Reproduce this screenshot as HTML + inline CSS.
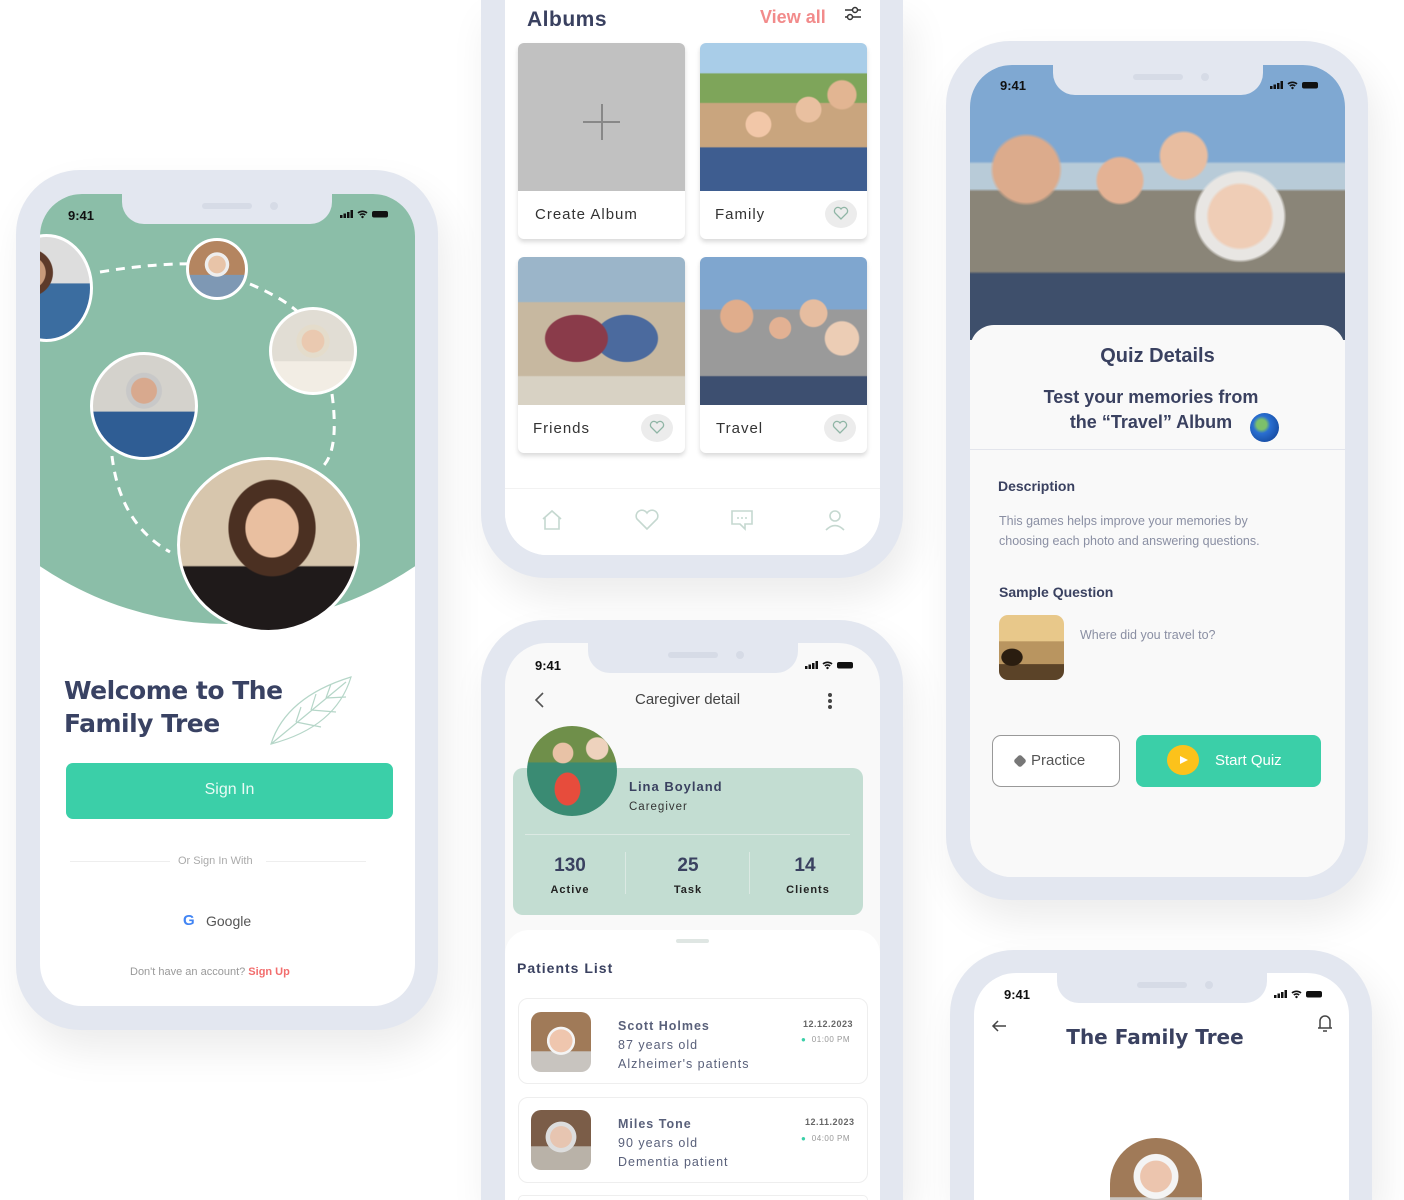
<!DOCTYPE html>
<html style="width:1404px;height:1200px;overflow:hidden"><head><meta charset="utf-8"><style>
*{margin:0;padding:0;box-sizing:border-box}
body{width:1404px;height:1200px;background:#fff;position:relative;overflow:hidden;font-family:"Liberation Sans",sans-serif;color:#3a4160}
.a{position:absolute}
.frame{position:absolute;background:#e3e7f0;border-radius:64px;box-shadow:8px 20px 40px rgba(0,0,0,.08)}
.screen{position:absolute;border-radius:42px;overflow:hidden;background:#fff}
.notch{position:absolute;background:#e3e7f0;height:30px;width:210px;border-radius:0 0 22px 22px}
.notch:before{content:"";position:absolute;left:80px;top:9px;width:50px;height:6px;border-radius:3px;background:#d6dbe6}
.notch:after{content:"";position:absolute;left:148px;top:8px;width:8px;height:8px;border-radius:50%;background:#d6dbe6}
.time{position:absolute;font-size:13px;font-weight:bold;color:#111}
.circ{position:absolute;border-radius:50%;border:3px solid #fff;overflow:hidden}
.card{position:absolute;background:#fff;box-shadow:0 3px 5px rgba(0,0,0,.15);border-radius:6px;overflow:hidden}
.heart{position:absolute;width:32px;height:28px;border-radius:50%;background:#ececec}
.b{font-weight:bold}
</style></head><body>

<svg width="0" height="0" style="position:absolute"><defs>
<g id="st"><rect x="0" y="6" width="2.5" height="3" fill="#111"/><rect x="3.5" y="4.5" width="2.5" height="4.5" fill="#111"/><rect x="7" y="3" width="2.5" height="6" fill="#111"/><rect x="10.5" y="1" width="2.5" height="8" fill="#111"/><path d="M18 4a7 7 0 0 1 9 0M19.8 6a4 4 0 0 1 5.4 0" stroke="#111" stroke-width="1.6" fill="none"/><circle cx="22.5" cy="8" r="1.2" fill="#111"/><rect x="32" y="2" width="16" height="6.5" rx="2" fill="#111"/></g>
<g id="hrt"><path d="M8 13 L2 7 A3.3 3.3 0 0 1 8 3 A3.3 3.3 0 0 1 14 7 Z" fill="none" stroke="#8fb5a5" stroke-width="1.3"/></g>
</defs></svg>

<!-- Phone 1 -->
<div class="frame" style="left:16px;top:170px;width:422px;height:860px"></div>
<div class="screen" style="left:40px;top:194px;width:375px;height:812px">
  <div class="a" style="left:-160px;top:-300px;width:695px;height:730px;border-radius:50%;background:#8bbea8"></div>
  <div class="time" style="left:28px;top:14px">9:41</div>
  <svg class="a" style="left:300px;top:15px" width="50" height="10"><use href="#st"/></svg>
  <svg class="a" style="left:0;top:0" width="375" height="440"><path d="M60 78 Q120 68 170 70 M210 90 Q245 105 260 120 M292 200 Q300 260 280 275 M72 262 Q80 330 130 358" stroke="#fff" stroke-width="3" stroke-dasharray="9 7" fill="none"/></svg>
  <div class="circ" style="left:-40px;top:40px;width:93px;height:108px;border-radius:50%;background:radial-gradient(circle at 30% 35%,#c89a7b 0 18%,#5d3a2a 19% 26%,transparent 27%),linear-gradient(#ddd 0 45%,#3b6da0 46%)"></div>
  <div class="circ" style="left:146px;top:44px;width:62px;height:62px;background:radial-gradient(circle at 50% 42%,#e8c4a8 0 20%,#eee 21% 28%,transparent 29%),linear-gradient(#b48560 0 60%,#7e98b4 61%)"></div>
  <div class="circ" style="left:229px;top:113px;width:88px;height:88px;background:radial-gradient(circle at 50% 38%,#eac9b0 0 17%,#e4dccb 18% 25%,transparent 26%),linear-gradient(#e1ddd4 0 62%,#f2ede4 63%)"></div>
  <div class="circ" style="left:50px;top:158px;width:108px;height:108px;background:radial-gradient(circle at 50% 35%,#d8a98e 0 15%,#c8c8c8 16% 21%,transparent 22%),linear-gradient(#d4d2cc 0 55%,#2f5d94 56%)"></div>
  <div class="circ" style="left:137px;top:263px;width:183px;height:176px;background:radial-gradient(ellipse at 52% 40%,#e9bfa0 0 20%,#4b3022 21% 33%,transparent 34%),linear-gradient(#d7c6ad 0 62%,#1f1a1a 63%)"></div>
  <div class="a b" style="left:24px;top:480px;font-size:25px;line-height:33px;color:#394263;font-family:'DejaVu Sans',sans-serif;letter-spacing:-.5px">Welcome to The<br>Family Tree</div>
  <svg class="a" style="left:226px;top:478px" width="90" height="78"><path d="M5 72 Q20 25 85 5 Q70 55 5 72Z M5 72 L80 10 M30 50 L35 35 M45 38 L50 22 M60 26 L65 12 M30 50 L55 55 M45 38 L70 40 M60 26 L80 25" stroke="#b5d6c8" stroke-width="1.2" fill="none"/></svg>
  <div class="a" style="left:26px;top:569px;width:327px;height:56px;border-radius:7px;background:#3bcfa8;color:#e8fbf5;font-size:16px;text-align:center;line-height:54px">Sign In</div>
  <div class="a" style="left:30px;top:667px;width:100px;border-top:1px solid #eee"></div>
  <div class="a" style="left:226px;top:667px;width:100px;border-top:1px solid #eee"></div>
  <div class="a" style="left:138px;top:661px;font-size:11px;color:#aaa">Or Sign In With</div>
  <div class="a b" style="left:143px;top:718px;font-size:15px;color:#4285f4">G</div>
  <div class="a" style="left:166px;top:719px;font-size:14px;color:#555">Google</div>
  <div class="a" style="left:90px;top:772px;font-size:11px;color:#999">Don't have an account? <span style="color:#f26d6d;font-weight:bold">Sign Up</span></div>
</div>
<div class="notch" style="left:122px;top:194px"></div>

<!-- Phone 2 albums -->
<div class="frame" style="left:481px;top:0;width:422px;height:578px;border-radius:0 0 64px 64px"></div>
<div class="screen" style="left:505px;top:0;width:375px;height:555px;border-radius:0 0 42px 42px">
 <div class="a" style="left:0;top:-60px;width:375px;height:615px">
  <div class="a b" style="left:22px;top:68px;font-size:21px;color:#3a4160;letter-spacing:.5px">Albums</div>
  <div class="a b" style="left:255px;top:67px;font-size:18px;color:#f28b8b">View all</div>
  <svg class="a" style="left:338px;top:64px" width="20" height="20"><path d="M2 6h16M2 13h16" stroke="#333" stroke-width="1.6"/><circle cx="12" cy="6" r="2.5" fill="#fff" stroke="#333" stroke-width="1.5"/><circle cx="7" cy="13" r="2.5" fill="#fff" stroke="#333" stroke-width="1.5"/></svg>
  <div class="card" style="left:13px;top:103px;width:167px;height:196px"><div style="height:148px;background:#c1c1c1;position:relative"><div class="a" style="left:65px;top:78px;width:37px;height:2px;background:#888"></div><div class="a" style="left:83px;top:61px;width:2px;height:36px;background:#888"></div></div><div class="a" style="left:17px;top:163px;font-size:15px;letter-spacing:1px;color:#333">Create Album</div></div>
  <div class="card" style="left:195px;top:103px;width:167px;height:196px"><div style="height:148px;background:radial-gradient(circle at 35% 55%,#f2c7a8 0 9%,transparent 10%),radial-gradient(circle at 65% 45%,#e9c0a0 0 9%,transparent 10%),radial-gradient(circle at 85% 35%,#e2b592 0 8%,transparent 9%),linear-gradient(#a9cde8 0 20%,#7ea55a 21% 40%,#c9a57e 41% 70%,#3e5d90 71%)"></div><div class="a" style="left:15px;top:163px;font-size:15px;letter-spacing:1px;color:#333">Family</div><div class="heart" style="left:125px;top:157px"><svg class="a" style="left:8px;top:6px" width="16" height="16"><use href="#hrt"/></svg></div></div>
  <div class="card" style="left:13px;top:317px;width:167px;height:196px"><div style="height:148px;background:radial-gradient(ellipse at 35% 55%,#8a3b4a 0 20%,transparent 21%),radial-gradient(ellipse at 65% 55%,#4b6a9e 0 20%,transparent 21%),linear-gradient(#9bb5c9 0 30%,#c7b8a0 31% 80%,#d8d2c4 81%)"></div><div class="a" style="left:15px;top:163px;font-size:15px;letter-spacing:1px;color:#333">Friends</div><div class="heart" style="left:123px;top:157px"><svg class="a" style="left:8px;top:6px" width="16" height="16"><use href="#hrt"/></svg></div></div>
  <div class="card" style="left:195px;top:317px;width:167px;height:196px"><div style="height:148px;background:radial-gradient(circle at 22% 40%,#e0ad8c 0 10%,transparent 11%),radial-gradient(circle at 48% 48%,#e2b193 0 9%,transparent 10%),radial-gradient(circle at 68% 38%,#e6bda0 0 9%,transparent 10%),radial-gradient(circle at 85% 55%,#eccdb5 0 10%,transparent 11%),linear-gradient(#7fa6cf 0 35%,#9a9a9a 36% 80%,#3d4f70 81%)"></div><div class="a" style="left:16px;top:163px;font-size:15px;letter-spacing:1px;color:#333">Travel</div><div class="heart" style="left:124px;top:157px"><svg class="a" style="left:8px;top:6px" width="16" height="16"><use href="#hrt"/></svg></div></div>
  <div class="a" style="left:0;top:548px;width:375px;height:67px;background:#fff;border-top:1px solid #f2f2f2"></div>
  <svg class="a" style="left:35px;top:568px" width="24" height="24"><path d="M3 11 L12 3 L21 11 M5 9 V21 H19 V9" stroke="#c5d8d0" stroke-width="1.6" fill="none"/></svg>
  <svg class="a" style="left:129px;top:568px" width="26" height="24"><path d="M13 21 L3 11 A5 5 0 0 1 13 5 A5 5 0 0 1 23 11 Z" stroke="#c5d8d0" stroke-width="1.6" fill="none"/></svg>
  <svg class="a" style="left:224px;top:568px" width="26" height="24"><path d="M3 3 H23 V16 H16 L16 21 L11 16 H3 Z" stroke="#c5d8d0" stroke-width="1.6" fill="none"/><circle cx="9" cy="10" r="1" fill="#c5d8d0"/><circle cx="13" cy="10" r="1" fill="#c5d8d0"/><circle cx="17" cy="10" r="1" fill="#c5d8d0"/></svg>
  <svg class="a" style="left:318px;top:568px" width="24" height="24"><circle cx="12" cy="8" r="5" stroke="#c5d8d0" stroke-width="1.6" fill="none"/><path d="M3 22 Q12 13 21 22" stroke="#c5d8d0" stroke-width="1.6" fill="none"/></svg>
 </div>
</div>

<!-- Phone 3 caregiver -->
<div class="frame" style="left:481px;top:620px;width:422px;height:580px;border-radius:64px 64px 0 0"></div>
<div class="screen" style="left:505px;top:643px;width:375px;height:557px;background:#f9f9f9;border-radius:42px 42px 0 0">
  <div class="time" style="left:30px;top:15px">9:41</div>
  <svg class="a" style="left:300px;top:17px" width="50" height="10"><use href="#st"/></svg>
  <svg class="a" style="left:28px;top:48px" width="14" height="18"><path d="M10 2 L3 9 L10 16" stroke="#555" stroke-width="1.6" fill="none"/></svg>
  <div class="a" style="left:130px;top:48px;font-size:15px;color:#444">Caregiver detail</div>
  <div class="a" style="left:323px;top:50px;width:4px;height:4px;border-radius:50%;background:#444;box-shadow:0 6px 0 #444,0 12px 0 #444"></div>
  <div class="a" style="left:8px;top:125px;width:350px;height:147px;border-radius:10px;background:#c3ddd2"></div>
  <div class="a" style="left:22px;top:83px;width:90px;height:90px;border-radius:50%;background:radial-gradient(circle at 40% 30%,#e8c2a6 0 12%,transparent 13%),radial-gradient(circle at 78% 25%,#eed2bd 0 11%,transparent 12%),radial-gradient(ellipse at 45% 70%,#e74c3c 0 18%,transparent 19%),linear-gradient(#6f8f4a 0 40%,#3a8b73 41%)"></div>
  <div class="a b" style="left:124px;top:136px;font-size:13px;letter-spacing:1px;color:#3a4160">Lina Boyland</div>
  <div class="a" style="left:124px;top:158px;font-size:11.5px;letter-spacing:1px;color:#333">Caregiver</div>
  <div class="a" style="left:20px;top:191px;width:325px;border-top:1px solid #dbe9e3"></div>
  <div class="a" style="left:120px;top:209px;height:42px;border-left:1px solid #dbe9e3"></div>
  <div class="a" style="left:244px;top:209px;height:42px;border-left:1px solid #dbe9e3"></div>
  <div class="a b" style="left:20px;top:212px;width:90px;text-align:center;font-size:19px;color:#3a4160">130</div>
  <div class="a b" style="left:138px;top:212px;width:90px;text-align:center;font-size:19px;color:#3a4160">25</div>
  <div class="a b" style="left:255px;top:212px;width:90px;text-align:center;font-size:19px;color:#3a4160">14</div>
  <div class="a b" style="left:20px;top:241px;width:90px;text-align:center;font-size:11px;letter-spacing:1px;color:#222">Active</div>
  <div class="a b" style="left:138px;top:241px;width:90px;text-align:center;font-size:11px;letter-spacing:1px;color:#222">Task</div>
  <div class="a b" style="left:258px;top:241px;width:90px;text-align:center;font-size:11px;letter-spacing:1px;color:#222">Clients</div>
  <div class="a" style="left:0;top:287px;width:375px;height:270px;background:#fff;border-radius:24px 24px 0 0"></div>
  <div class="a" style="left:171px;top:296px;width:33px;height:4px;border-radius:2px;background:#dfe6e3"></div>
  <div class="a b" style="left:12px;top:317px;font-size:14px;letter-spacing:1px;color:#3a4160">Patients List</div>
  <div class="a" style="left:13px;top:355px;width:350px;height:86px;border:1px solid #eee;border-radius:10px;background:#fff"></div>
  <div class="a" style="left:26px;top:369px;width:60px;height:60px;border-radius:10px;background:radial-gradient(circle at 50% 48%,#efc6ae 0 26%,#f4f4f4 27% 32%,transparent 33%),linear-gradient(#a07a58 0 65%,#c8c4bf 66%)"></div>
  <div class="a" style="left:113px;top:374px;font-size:12.5px;letter-spacing:1px;line-height:19px;color:#59607a"><b>Scott Holmes</b><br>87 years old<br>Alzheimer's patients</div>
  <div class="a b" style="left:298px;top:376px;font-size:9px;letter-spacing:.5px;color:#666">12.12.2023</div>
  <div class="a" style="left:296px;top:392px;font-size:8px;letter-spacing:.5px;color:#999"><span style="color:#3bcfa8">●</span>&nbsp; 01:00 PM</div>
  <div class="a" style="left:13px;top:454px;width:350px;height:86px;border:1px solid #eee;border-radius:10px;background:#fff"></div>
  <div class="a" style="left:26px;top:467px;width:60px;height:60px;border-radius:10px;background:radial-gradient(circle at 50% 45%,#e7c5b1 0 24%,#ddd 25% 34%,transparent 35%),linear-gradient(#7b5d48 0 60%,#b9b2a8 61%)"></div>
  <div class="a" style="left:113px;top:472px;font-size:12.5px;letter-spacing:1px;line-height:19px;color:#59607a"><b>Miles Tone</b><br>90 years old<br>Dementia patient</div>
  <div class="a b" style="left:300px;top:474px;font-size:9px;letter-spacing:.5px;color:#666">12.11.2023</div>
  <div class="a" style="left:296px;top:491px;font-size:8px;letter-spacing:.5px;color:#999"><span style="color:#3bcfa8">●</span>&nbsp; 04:00 PM</div>
  <div class="a" style="left:13px;top:552px;width:350px;height:5px;border:1px solid #eee;border-bottom:0;border-radius:10px 10px 0 0;background:#fff"></div>
</div>
<div class="notch" style="left:588px;top:643px"></div>

<!-- Phone 4 quiz -->
<div class="frame" style="left:946px;top:41px;width:422px;height:859px"></div>
<div class="screen" style="left:970px;top:65px;width:375px;height:812px;background:#f9f9f9">
  <div class="a" style="left:0;top:0;width:375px;height:275px;background:radial-gradient(circle at 15% 38%,#dcab8c 0 9%,transparent 10%),radial-gradient(circle at 40% 42%,#e4b294 0 8%,transparent 9%),radial-gradient(circle at 57% 33%,#e8bda0 0 8%,transparent 9%),radial-gradient(circle at 72% 55%,#efcdb6 0 10%,#e8e6e3 11% 14%,transparent 15%),linear-gradient(#7fa8d2 0 35%,#b8cbd8 36% 45%,#8a8578 46% 75%,#3e4f6b 76%)"></div>
  <div class="time" style="left:30px;top:13px">9:41</div>
  <svg class="a" style="left:300px;top:15px" width="50" height="10"><use href="#st"/></svg>
  <div class="a" style="left:0;top:260px;width:375px;height:552px;background:#f9f9f9;border-radius:24px 24px 0 0"></div>
  <div class="a b" style="left:0;top:280px;width:375px;text-align:center;font-size:20px;color:#3a4160">Quiz Details</div>
  <div class="a b" style="left:0;top:320px;width:362px;text-align:center;font-size:18px;line-height:25px;color:#3a4160">Test your memories from<br>the “Travel” Album</div>
  <div class="a" style="left:280px;top:348px;width:29px;height:29px;border-radius:50%;background:radial-gradient(circle at 40% 40%,#7cc06a 0 20%,#2a6fd1 35%,#0d3a8a)"></div>
  <div class="a" style="left:0;top:384px;width:375px;border-top:1px solid #e3e5ec"></div>
  <div class="a b" style="left:28px;top:413px;font-size:14px;color:#3a4160">Description</div>
  <div class="a" style="left:29px;top:446px;font-size:12.5px;line-height:20px;color:#8a8fa3">This games helps improve your memories by<br>choosing each photo and answering questions.</div>
  <div class="a b" style="left:29px;top:519px;font-size:14px;color:#3a4160">Sample Question</div>
  <div class="a" style="left:29px;top:550px;width:65px;height:65px;border-radius:9px;background:radial-gradient(ellipse at 20% 65%,#2a1d10 0 14%,transparent 15%),linear-gradient(#e8c88a 0 40%,#b99560 41% 75%,#5b4328 76%)"></div>
  <div class="a" style="left:110px;top:563px;font-size:12.5px;color:#8a8fa3">Where did you travel to?</div>
  <div class="a" style="left:22px;top:670px;width:128px;height:52px;border:1.5px solid #999;border-radius:9px;background:#fff"></div>
  <div class="a" style="left:44px;top:690px;width:12px;height:12px;background:#777;border-radius:3px;transform:rotate(45deg) scale(.8)"></div>
  <div class="a" style="left:61px;top:687px;font-size:15px;color:#555">Practice</div>
  <div class="a" style="left:166px;top:670px;width:185px;height:52px;border-radius:8px;background:#3bcfa8"></div>
  <div class="a" style="left:197px;top:680px;width:32px;height:30px;border-radius:50%;background:#fcc21b"></div>
  <svg class="a" style="left:209px;top:690px" width="10" height="10"><path d="M1 1 L9 5 L1 9Z" fill="#fff"/></svg>
  <div class="a" style="left:245px;top:687px;font-size:15px;color:#fff">Start Quiz</div>
</div>
<div class="notch" style="left:1053px;top:65px"></div>

<!-- Phone 5 -->
<div class="frame" style="left:950px;top:950px;width:422px;height:250px;border-radius:64px 64px 0 0"></div>
<div class="screen" style="left:974px;top:973px;width:375px;height:227px;border-radius:42px 42px 0 0">
  <div class="time" style="left:30px;top:14px">9:41</div>
  <svg class="a" style="left:300px;top:16px" width="50" height="10"><use href="#st"/></svg>
  <svg class="a" style="left:16px;top:45px" width="18" height="16"><path d="M16 8 H3 M8 3 L3 8 L8 13" stroke="#444" stroke-width="1.5" fill="none"/></svg>
  <div class="a b" style="left:0;top:52px;width:362px;text-align:center;font-size:20px;color:#3a4160;font-family:'DejaVu Sans',sans-serif">The Family Tree</div>
  <svg class="a" style="left:342px;top:39px" width="18" height="22"><path d="M4 16 V9 A5 5 0 0 1 14 9 V16 Z M2 16 H16 M7 19 H11" stroke="#444" stroke-width="1.5" fill="none"/></svg>
  <div class="a" style="left:136px;top:165px;width:92px;height:62px;border-radius:46px 46px 0 0;background:radial-gradient(circle at 50% 62%,#ecc5ae 0 26%,#f4f4f4 27% 37%,transparent 38%),linear-gradient(#a07a58 0 95%,#c8c4bf 96%)"></div>
</div>
<div class="notch" style="left:1057px;top:973px"></div>
</body></html>
